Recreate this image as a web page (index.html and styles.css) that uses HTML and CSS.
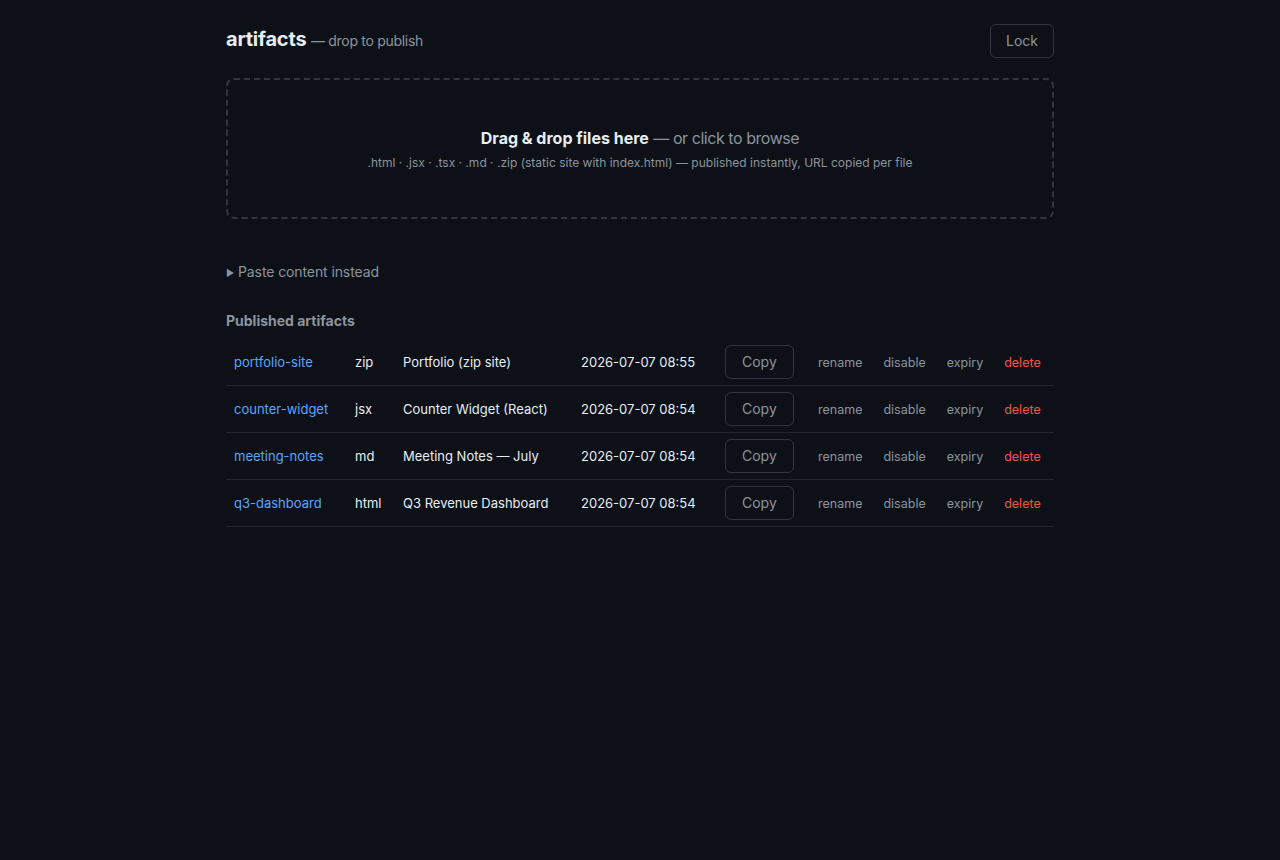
FILE: index.html
```html
<!DOCTYPE html>
<html lang="en">
<head>
  <meta charset="UTF-8" />
  <meta name="viewport" content="width=device-width, initial-scale=1.0"/>
  <title>artifacts</title>
  <link rel="stylesheet" href="styles.css">
</head>
<body>
<div class="container">
  <header class="top">
    <h1>artifacts <span class="sub">— drop to publish</span></h1>
    <button class="btn lock">Lock</button>
  </header>

  <div class="dropzone">
    <div class="drop-title"><strong>Drag &amp; drop files here</strong> <span>— or click to browse</span></div>
    <div class="drop-hint">.html · .jsx · .tsx · .md · .zip (static site with index.html) — published instantly, URL copied per file</div>
  </div>

  <details class="paste">
    <summary>Paste content instead</summary>
  </details>

  <h2>Published artifacts</h2>

  <table class="list">
    <colgroup>
      <col style="width:121px">
      <col style="width:48px">
      <col style="width:178px">
      <col style="width:144px">
      <col style="width:84px">
      <col>
    </colgroup>
    <tbody>
      <tr>
        <td><a href="#">portfolio-site</a></td>
        <td>zip</td>
        <td>Portfolio (zip site)</td>
        <td>2026-07-07 08:55</td>
        <td><button class="btn">Copy</button></td>
        <td class="actions"><a href="#">rename</a><a href="#">disable</a><a href="#">expiry</a><a href="#" class="danger">delete</a></td>
      </tr>
      <tr>
        <td><a href="#">counter-widget</a></td>
        <td>jsx</td>
        <td>Counter Widget (React)</td>
        <td>2026-07-07 08:54</td>
        <td><button class="btn">Copy</button></td>
        <td class="actions"><a href="#">rename</a><a href="#">disable</a><a href="#">expiry</a><a href="#" class="danger">delete</a></td>
      </tr>
      <tr>
        <td><a href="#">meeting-notes</a></td>
        <td>md</td>
        <td>Meeting Notes — July</td>
        <td>2026-07-07 08:54</td>
        <td><button class="btn">Copy</button></td>
        <td class="actions"><a href="#">rename</a><a href="#">disable</a><a href="#">expiry</a><a href="#" class="danger">delete</a></td>
      </tr>
      <tr>
        <td><a href="#">q3-dashboard</a></td>
        <td>html</td>
        <td>Q3 Revenue Dashboard</td>
        <td>2026-07-07 08:54</td>
        <td><button class="btn">Copy</button></td>
        <td class="actions"><a href="#">rename</a><a href="#">disable</a><a href="#">expiry</a><a href="#" class="danger">delete</a></td>
      </tr>
    </tbody>
  </table>
</div>
</body>
</html>
```

FILE: styles.css
```css
body {
  font-family: Inter, "Noto Sans", sans-serif;
  background: #0d1117;
  color: #e6edf3;
  margin: 0;
  padding: 24px 0;
}
.container {
  width: 828px;
  margin: 0 auto;
}
.top {
  display: flex;
  align-items: center;
  justify-content: space-between;
  height: 34px;
  margin-bottom: 20px;
}
h1 {
  margin: 0 0 2px;
  font-size: 20px;
  line-height: 24px;
  font-weight: 700;
  letter-spacing: -0.2px;
}
h1 .sub {
  font-size: 14px;
  font-weight: 400;
  color: #8b949e;
  letter-spacing: -0.3px;
}
.btn {
  font-family: inherit;
  font-size: 14px;
  line-height: 20px;
  color: #8b949e;
  background: transparent;
  border: 1px solid #30363d;
  border-radius: 6px;
  padding: 6px 16px;
  cursor: pointer;
}
.btn.lock {
  padding: 6px 15px;
}
.dropzone {
  border: 2px dashed #30363d;
  border-radius: 8px;
  padding: 48px 20px 46px;
  text-align: center;
}
.drop-title {
  font-size: 16px;
  line-height: 20px;
  color: #8b949e;
  margin-bottom: 7px;
}
.drop-title strong {
  color: #e6edf3;
}
.drop-title span {
  letter-spacing: -0.45px;
}
.drop-hint {
  font-size: 12px;
  line-height: 16px;
  color: #8b949e;
}
.paste {
  margin-top: 43px;
  font-size: 14px;
  line-height: 20px;
  color: #8b949e;
  letter-spacing: -0.1px;
}
.paste summary {
  cursor: pointer;
  list-style: none;
}
.paste summary::before {
  content: "\25B6";
  font-size: 9px;
  display: inline-block;
  width: 12px;
  vertical-align: 1px;
}
h2 {
  margin: 28px 0 8px;
  font-size: 14px;
  line-height: 20px;
  font-weight: 700;
  color: #8b949e;
}
.list {
  width: 100%;
  table-layout: fixed;
  border-collapse: collapse;
  font-size: 13px;
}
.list td {
  padding: 6px 8px;
  border-bottom: 1px solid #21262d;
  white-space: nowrap;
}
.list a {
  color: #58a6ff;
  text-decoration: none;
}
.list .actions {
  padding-left: 9px;
  font-size: 12.5px;
}
.list .actions a {
  color: #8b949e;
  padding: 4px 8px;
  margin-right: 5px;
}
.list .actions a.danger {
  color: #f85149;
  margin-right: 0;
}
```
